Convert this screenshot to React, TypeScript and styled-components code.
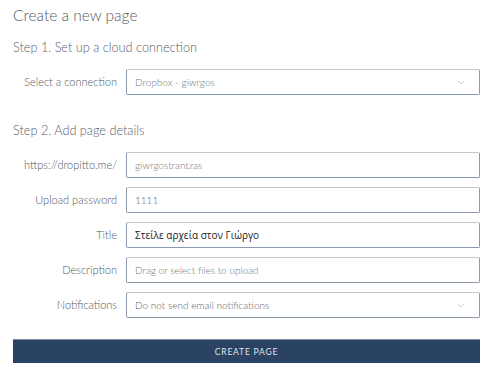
import React from 'react';
import styled, {createGlobalStyle} from 'styled-components';

const GlobalStyle = createGlobalStyle`
  html, body {
    margin: 0;
    padding: 0;
    background: #ffffff;
  }
  body {
    font-family: Lato, "Open Sans", "Noto Sans", sans-serif;
  }
`

interface FieldType {
    label: string;
    value: string;
    placeholder?: boolean;
    dark?: boolean;
    select?: boolean;
}

const details: FieldType[] = [
    {label: 'https://dropitto.me/', value: 'giwrgostrantzas', placeholder: true},
    {label: 'Upload password', value: '1111'},
    {label: 'Title', value: 'Στείλε αρχεία στον Γιώργο', dark: true},
    {label: 'Description', value: 'Drag or select files to upload', placeholder: true},
    {label: 'Notifications', value: 'Do not send email notifications', select: true},
]

const Chevron = () => (
    <svg width="8" height="5" viewBox="0 0 8 5" fill="none">
        <path d="M1 1l3 3 3-3" stroke="#c3c8d0" strokeWidth="0.9"/>
    </svg>
)

const Field = ({label, value, placeholder, dark, select}: FieldType) => (
    <Row>
        <Label>{label}</Label>
        <InputBox>
            <Value $placeholder={placeholder} $dark={dark}>{value}</Value>
            {select && <Chevron/>}
        </InputBox>
    </Row>
)

const App = () => {
    return (
        <Page>
            <GlobalStyle/>
            <Title>Create a new page</Title>
            <StepTitle>Step 1. Set up a cloud connection</StepTitle>
            <Group>
                <Field label={'Select a connection'} value={'Dropbox - giwrgos'} placeholder select/>
            </Group>
            <StepTitle $second>Step 2. Add page details</StepTitle>
            <Group>
                {details.map((item, index) => (
                    <Field key={index} {...item}/>
                ))}
            </Group>
            <CreateButton>CREATE PAGE</CreateButton>
        </Page>
    );
};

const Page = styled.div`
  width: 467px;
  padding: 4px 20px 0 13px;
`
const Title = styled.h1`
  margin: 0;
  font-weight: 300;
  font-size: 15.5px;
  line-height: 22px;
  color: #555b63;
`
const StepTitle = styled.h2<{ $second?: boolean }>`
  margin: ${({$second}) => $second ? '26px 0 0' : '12px 0 0'};
  font-weight: 300;
  font-size: 12.7px;
  line-height: 18px;
  color: #5a6068;
`
const Group = styled.div`
  display: flex;
  flex-direction: column;
  gap: 9px;
  margin-top: 13px;
`
const Row = styled.div`
  display: grid;
  grid-template-columns: 104px 354px;
  column-gap: 9px;
  align-items: center;
`
const Label = styled.div`
  text-align: right;
  font-size: 11px;
  font-weight: 300;
  color: #52575e;
  padding-bottom: 2px;
`
const InputBox = styled.div`
  box-sizing: border-box;
  height: 26px;
  display: flex;
  align-items: center;
  justify-content: space-between;
  padding: 0 14px 0 8px;
  border: 1px solid #8b99ad;
  border-top-color: #c2c8d2;
  border-radius: 2px;
  background: #ffffff;
`
const Value = styled.span<{ $placeholder?: boolean; $dark?: boolean }>`
  font-size: 10px;
  font-weight: ${({$dark}) => $dark ? 400 : 300};
  font-family: ${({$dark}) => $dark ? '"Open Sans", "Noto Sans", sans-serif' : 'Lato, sans-serif'};
  color: ${({$placeholder, $dark}) => $dark ? '#222222' : $placeholder ? '#737980' : '#5a5f66'};
`
const CreateButton = styled.div`
  margin-top: 21px;
  width: 467px;
  height: 24px;
  display: flex;
  align-items: center;
  justify-content: center;
  background: #2a4264;
  border-top: 1px solid #7d8ca3;
  box-sizing: border-box;
  font-size: 8.5px;
  letter-spacing: 0.8px;
  color: #dfe4ec;
`

export default App;
